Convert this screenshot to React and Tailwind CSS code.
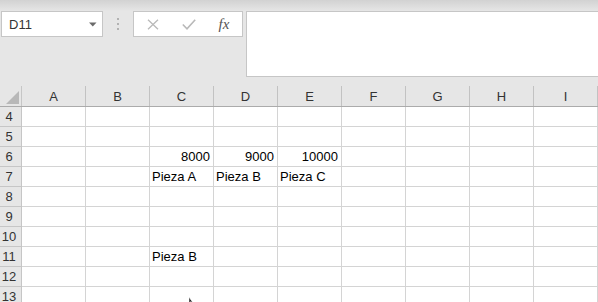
import React from "react";

const cols = ["A", "B", "C", "D", "E", "F", "G", "H", "I"];
const rows = [4, 5, 6, 7, 8, 9, 10, 11, 12, 13];
const data = {
  6: { C: ["8000", "r"], D: ["9000", "r"], E: ["10000", "r"] },
  7: { C: ["Pieza A", "l"], D: ["Pieza B", "l"], E: ["Pieza C", "l"] },
  11: { C: ["Pieza B", "l"] },
};

export default function App() {
  return (
    <div
      className="relative w-[598px] h-[302px] overflow-hidden bg-[#e6e6e6] text-[13px]"
      style={{ fontFamily: '"Liberation Sans", Arial, sans-serif' }}
    >
      <div className="h-[11px] bg-gradient-to-b from-[#d2d2d2] to-[#e6e6e6]" />
      <div className="flex h-[66px] items-start">
        <div className="ml-[1px] w-[102px] h-[26px] bg-white border border-[#c6c6c6] flex items-center justify-between pl-[7px] pr-[5px]">
          <span className="text-[#333] leading-none">D11</span>
          <svg width="8" height="5" viewBox="0 0 8 5">
            <path d="M0 0.5 H7.5 L3.75 4.5 Z" fill="#6b6b6b" />
          </svg>
        </div>
        <div className="w-[30px] h-[26px] flex flex-col items-center justify-center gap-[3px]">
          <span className="w-[2px] h-[2px] bg-[#b2b2b2]" />
          <span className="w-[2px] h-[2px] bg-[#b2b2b2]" />
          <span className="w-[2px] h-[2px] bg-[#b2b2b2]" />
        </div>
        <div className="w-[110px] h-[26px] bg-white border border-[#c6c6c6] flex items-center">
          <div className="w-[36px] flex justify-center pl-[2px]">
            <svg width="12" height="11" viewBox="0 0 12 11">
              <path d="M1 0.8 L11 10.2 M11 0.8 L1 10.2" stroke="#b9b9b9" strokeWidth="1.3" />
            </svg>
          </div>
          <div className="w-[36px] flex justify-center pl-[2px]">
            <svg width="14" height="11" viewBox="0 0 14 11">
              <path d="M0.8 5.5 L5 9.8 L13.2 0.8" stroke="#b9b9b9" strokeWidth="1.6" fill="none" />
            </svg>
          </div>
          <div className="w-[36px] flex justify-center">
            <span
              className="italic text-[15px] text-[#555] leading-none"
              style={{ fontFamily: '"Liberation Serif", "Times New Roman", serif' }}
            >
              fx
            </span>
          </div>
        </div>
        <div className="ml-[3px] flex-1 h-[66px] bg-white border-l border-t border-b border-[#c6c6c6]" />
      </div>
      <div className="h-[9px]" />
      <div className="flex h-[21px] border-b border-[#ababab]">
        <div className="w-[22px] h-full border-r border-[#c6c6c6] flex items-end justify-end pr-[2px] pb-[2px]">
          <svg width="13" height="13" viewBox="0 0 13 13">
            <path d="M13 0 V13 H0 Z" fill="#b8b8b8" />
          </svg>
        </div>
        {cols.map((c) => (
          <div
            key={c}
            className="w-[64px] shrink-0 h-full border-r border-[#c2c2c2] flex items-center justify-center text-[#333] leading-none pt-[1px]"
          >
            {c}
          </div>
        ))}
      </div>
      {rows.map((r) => (
        <div key={r} className="flex h-[20px]">
          <div className="w-[22px] h-full border-r border-b border-[#c6c6c6] bg-[#e6e6e6] flex items-center justify-center pr-[3px] text-[#333] leading-[20px]">
            {r}
          </div>
          {cols.map((c) => {
            const v = data[r] && data[r][c];
            return (
              <div
                key={c}
                className={
                  "w-[64px] shrink-0 h-full bg-white border-r border-b border-[#d4d4d4] leading-[20px] whitespace-nowrap text-black " +
                  (v && v[1] === "r" ? "text-right pr-[3px]" : "text-left pl-[2px]")
                }
              >
                {v ? v[0] : ""}
              </div>
            );
          })}
        </div>
      ))}
      <svg className="absolute left-[188px] top-[297px]" width="8" height="6" viewBox="0 0 8 6">
        <path d="M1 0 L1 6 L2.5 4.8 L5 6 Z" fill="#111" stroke="#fff" strokeWidth="0.6" />
      </svg>
    </div>
  );
}
